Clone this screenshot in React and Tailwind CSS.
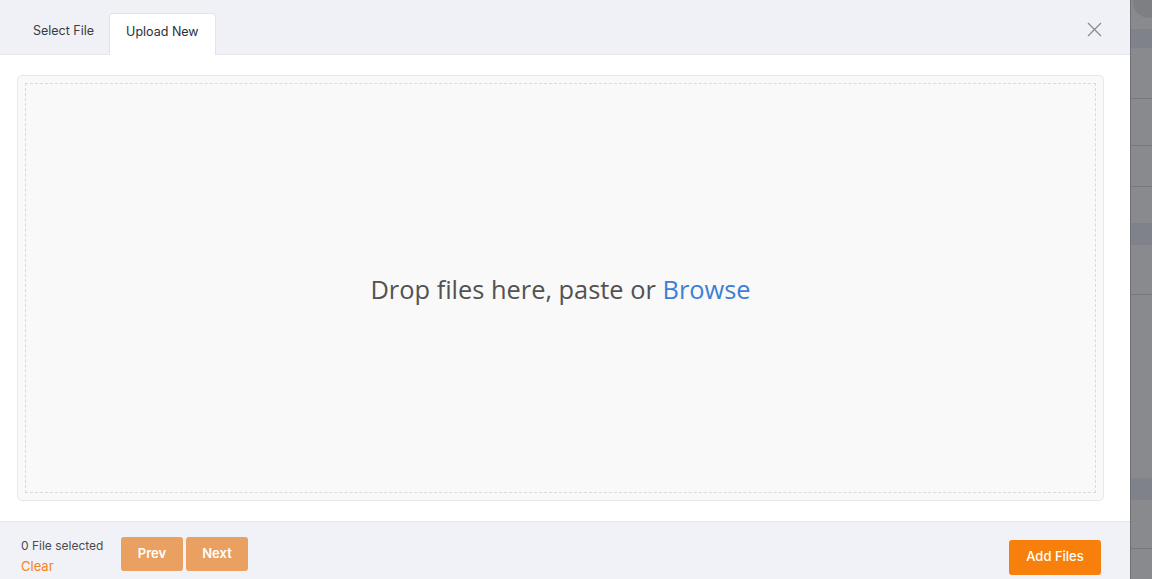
import { useState } from 'react'

const BODY_FONT = { fontFamily: 'Inter, "Noto Sans", sans-serif' }

export default function App() {
  const [tab, setTab] = useState('upload') // select | upload
  const [count] = useState(0)

  return (
    <div className="flex h-[579px] w-[1152px] overflow-hidden bg-[#898a8e]" style={BODY_FONT}>
      {/* ========== MODAL ========== */}
      <div className="flex w-[1130px] shrink-0 flex-col bg-white">
        {/* header */}
        <div className="flex h-[55px] items-end justify-between border-b border-[#e6e7ec] bg-[#f0f1f6] pl-[18px] pr-[28px]">
          <div className="flex items-end">
            <Tab active={tab === 'select'} onClick={() => setTab('select')}>
              Select File
            </Tab>
            <Tab active={tab === 'upload'} onClick={() => setTab('upload')}>
              Upload New
            </Tab>
          </div>
          <button className="mb-[17px] text-[#8a8c93]" aria-label="close">
            <svg width="15" height="15" viewBox="0 0 15 15" fill="none" stroke="currentColor" strokeWidth="1.3">
              <path d="M1 1L14 14M14 1L1 14" />
            </svg>
          </button>
        </div>

        {/* body */}
        <div className="flex flex-1 flex-col pl-[17px] pr-[26px] pt-[20px] pb-[20px]">
          <div className="flex flex-1 rounded-[5px] border border-[#e8e8e8] bg-[#f9f9f9] p-[7px]">
            <div
              className="flex flex-1 items-center justify-center border border-dashed border-[#dadada]"
              style={{ fontFamily: '"Open Sans", "Noto Sans", sans-serif' }}
            >
              <p className="pt-[3px] text-[25.4px] text-[#525252]">
                Drop files here, paste or{' '}
                <button className="text-[#3d7fd6]">Browse</button>
              </p>
            </div>
          </div>
        </div>

        {/* footer */}
        <div className="flex h-[58px] items-center justify-between border-t border-[#e6e7ec] bg-[#f1f2f7] pl-[21px] pr-[29px] pt-[6px]">
          <div className="flex items-center">
            <div className="w-[100px] pt-[6px]">
              <div className="text-[12px] leading-[18px] text-[#4a4b50]">{count} File selected</div>
              <button className="block text-[13px] leading-[22px] text-[#f5831a]">Clear</button>
            </div>
            <div className="flex gap-[3px]">
              <button className="h-[34px] w-[62px] rounded-[3px] bg-[#e9a061] text-[13px] font-semibold text-white">
                Prev
              </button>
              <button className="h-[34px] w-[62px] rounded-[3px] bg-[#e9a061] text-[13px] font-semibold text-white">
                Next
              </button>
            </div>
          </div>
          <button className="mt-[7px] h-[35px] w-[92px] rounded-[3px] bg-[#f77f0c] text-[13px] font-medium text-white">
            Add Files
          </button>
        </div>
      </div>

      {/* ========== page behind the overlay ========== */}
      <div className="flex flex-1 flex-col border-l border-[#6f7075]">
        <div className="relative h-[29px]">
          <div className="absolute -top-[14px] left-[2px] h-[32px] w-[32px] rounded-full bg-[#7e7f83]" />
        </div>
        <div className="h-[19px] bg-[#7f828a]" />
        <div className="h-[51px] border-b border-[#76777b]" />
        <div className="h-[47px] border-b border-[#76777b]" />
        <div className="h-[41px] border-b border-[#76777b]" />
        <div className="h-[36px]" />
        <div className="h-[22px] bg-[#7f828a]" />
        <div className="h-[50px] border-b border-[#76777b]" />
        <div className="h-[183px]" />
        <div className="h-[22px] bg-[#7f828a]" />
        <div className="h-[49px] border-b border-[#76777b]" />
        <div className="flex-1" />
      </div>
    </div>
  )
}

/* ========== Atoms ========== */
function Tab({ active, onClick, children }) {
  return (
    <button
      onClick={onClick}
      className={
        active
          ? 'h-[42px] -mb-px rounded-t-[4px] border border-b-0 border-[#e2e3e8] bg-white px-[16px] pb-[4px] text-[12.5px] text-[#2c2f3a]'
          : 'h-[42px] px-[15px] pb-[4px] text-[12.5px] text-[#3a3b40]'
      }
    >
      {children}
    </button>
  )
}
